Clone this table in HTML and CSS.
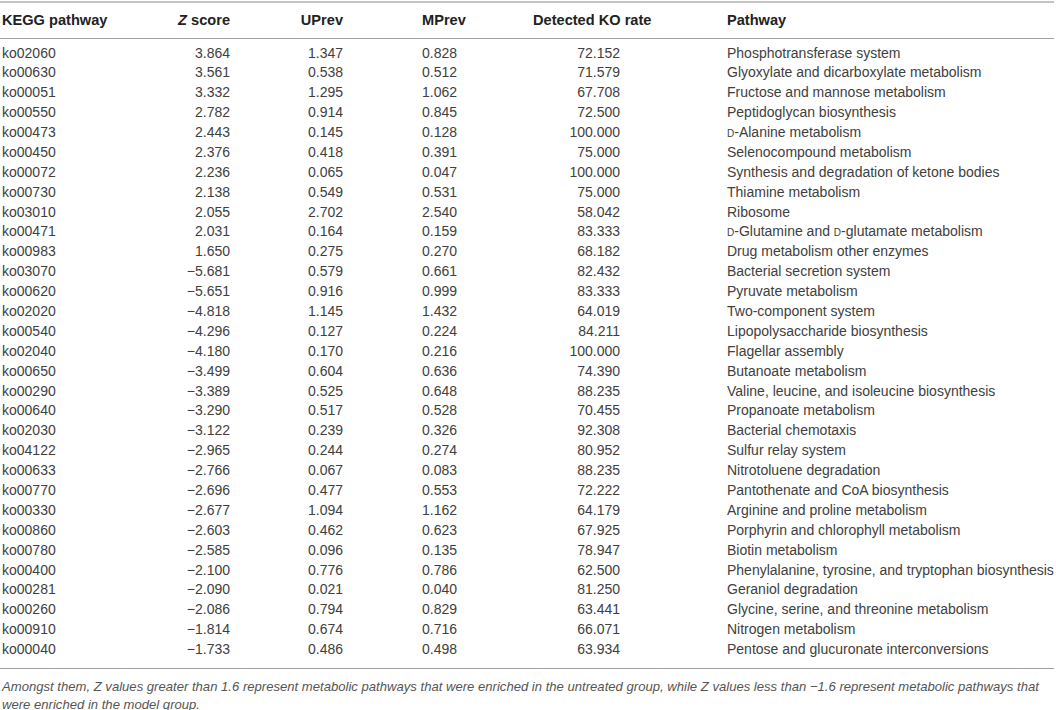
FILE: index.html
```html
<!DOCTYPE html>
<html lang="en">
<head>
  <meta charset="UTF-8">
  <title>KEGG pathway Z scores</title>
  <link rel="stylesheet" href="styles.css">
</head>
<body>
  <table class="kegg">
    <colgroup>
      <col class="c-id">
      <col class="c-z">
      <col class="c-u">
      <col class="c-m">
      <col class="c-ko">
      <col class="c-path">
    </colgroup>
    <thead>
      <tr>
        <th class="id">KEGG pathway</th>
        <th class="z"><i>Z</i> score</th>
        <th class="u">UPrev</th>
        <th class="m">MPrev</th>
        <th class="ko-h">Detected KO rate</th>
        <th class="path">Pathway</th>
      </tr>
    </thead>
    <tbody>
      <tr class="first"><td class="id">ko02060</td><td class="z">3.864</td><td class="u">1.347</td><td class="m">0.828</td><td class="ko">72.152</td><td class="path">Phosphotransferase system</td></tr>
      <tr><td class="id">ko00630</td><td class="z">3.561</td><td class="u">0.538</td><td class="m">0.512</td><td class="ko">71.579</td><td class="path">Glyoxylate and dicarboxylate metabolism</td></tr>
      <tr><td class="id">ko00051</td><td class="z">3.332</td><td class="u">1.295</td><td class="m">1.062</td><td class="ko">67.708</td><td class="path">Fructose and mannose metabolism</td></tr>
      <tr><td class="id">ko00550</td><td class="z">2.782</td><td class="u">0.914</td><td class="m">0.845</td><td class="ko">72.500</td><td class="path">Peptidoglycan biosynthesis</td></tr>
      <tr><td class="id">ko00473</td><td class="z">2.443</td><td class="u">0.145</td><td class="m">0.128</td><td class="ko">100.000</td><td class="path"><span class="sc">d</span>-Alanine metabolism</td></tr>
      <tr><td class="id">ko00450</td><td class="z">2.376</td><td class="u">0.418</td><td class="m">0.391</td><td class="ko">75.000</td><td class="path">Selenocompound metabolism</td></tr>
      <tr><td class="id">ko00072</td><td class="z">2.236</td><td class="u">0.065</td><td class="m">0.047</td><td class="ko">100.000</td><td class="path">Synthesis and degradation of ketone bodies</td></tr>
      <tr><td class="id">ko00730</td><td class="z">2.138</td><td class="u">0.549</td><td class="m">0.531</td><td class="ko">75.000</td><td class="path">Thiamine metabolism</td></tr>
      <tr><td class="id">ko03010</td><td class="z">2.055</td><td class="u">2.702</td><td class="m">2.540</td><td class="ko">58.042</td><td class="path">Ribosome</td></tr>
      <tr><td class="id">ko00471</td><td class="z">2.031</td><td class="u">0.164</td><td class="m">0.159</td><td class="ko">83.333</td><td class="path"><span class="sc">d</span>-Glutamine and <span class="sc">d</span>-glutamate metabolism</td></tr>
      <tr><td class="id">ko00983</td><td class="z">1.650</td><td class="u">0.275</td><td class="m">0.270</td><td class="ko">68.182</td><td class="path">Drug metabolism other enzymes</td></tr>
      <tr><td class="id">ko03070</td><td class="z">&minus;5.681</td><td class="u">0.579</td><td class="m">0.661</td><td class="ko">82.432</td><td class="path">Bacterial secretion system</td></tr>
      <tr><td class="id">ko00620</td><td class="z">&minus;5.651</td><td class="u">0.916</td><td class="m">0.999</td><td class="ko">83.333</td><td class="path">Pyruvate metabolism</td></tr>
      <tr><td class="id">ko02020</td><td class="z">&minus;4.818</td><td class="u">1.145</td><td class="m">1.432</td><td class="ko">64.019</td><td class="path">Two-component system</td></tr>
      <tr><td class="id">ko00540</td><td class="z">&minus;4.296</td><td class="u">0.127</td><td class="m">0.224</td><td class="ko">84.211</td><td class="path">Lipopolysaccharide biosynthesis</td></tr>
      <tr><td class="id">ko02040</td><td class="z">&minus;4.180</td><td class="u">0.170</td><td class="m">0.216</td><td class="ko">100.000</td><td class="path">Flagellar assembly</td></tr>
      <tr><td class="id">ko00650</td><td class="z">&minus;3.499</td><td class="u">0.604</td><td class="m">0.636</td><td class="ko">74.390</td><td class="path">Butanoate metabolism</td></tr>
      <tr><td class="id">ko00290</td><td class="z">&minus;3.389</td><td class="u">0.525</td><td class="m">0.648</td><td class="ko">88.235</td><td class="path">Valine, leucine, and isoleucine biosynthesis</td></tr>
      <tr><td class="id">ko00640</td><td class="z">&minus;3.290</td><td class="u">0.517</td><td class="m">0.528</td><td class="ko">70.455</td><td class="path">Propanoate metabolism</td></tr>
      <tr><td class="id">ko02030</td><td class="z">&minus;3.122</td><td class="u">0.239</td><td class="m">0.326</td><td class="ko">92.308</td><td class="path">Bacterial chemotaxis</td></tr>
      <tr><td class="id">ko04122</td><td class="z">&minus;2.965</td><td class="u">0.244</td><td class="m">0.274</td><td class="ko">80.952</td><td class="path">Sulfur relay system</td></tr>
      <tr><td class="id">ko00633</td><td class="z">&minus;2.766</td><td class="u">0.067</td><td class="m">0.083</td><td class="ko">88.235</td><td class="path">Nitrotoluene degradation</td></tr>
      <tr><td class="id">ko00770</td><td class="z">&minus;2.696</td><td class="u">0.477</td><td class="m">0.553</td><td class="ko">72.222</td><td class="path">Pantothenate and CoA biosynthesis</td></tr>
      <tr><td class="id">ko00330</td><td class="z">&minus;2.677</td><td class="u">1.094</td><td class="m">1.162</td><td class="ko">64.179</td><td class="path">Arginine and proline metabolism</td></tr>
      <tr><td class="id">ko00860</td><td class="z">&minus;2.603</td><td class="u">0.462</td><td class="m">0.623</td><td class="ko">67.925</td><td class="path">Porphyrin and chlorophyll metabolism</td></tr>
      <tr><td class="id">ko00780</td><td class="z">&minus;2.585</td><td class="u">0.096</td><td class="m">0.135</td><td class="ko">78.947</td><td class="path">Biotin metabolism</td></tr>
      <tr><td class="id">ko00400</td><td class="z">&minus;2.100</td><td class="u">0.776</td><td class="m">0.786</td><td class="ko">62.500</td><td class="path">Phenylalanine, tyrosine, and tryptophan biosynthesis</td></tr>
      <tr><td class="id">ko00281</td><td class="z">&minus;2.090</td><td class="u">0.021</td><td class="m">0.040</td><td class="ko">81.250</td><td class="path">Geraniol degradation</td></tr>
      <tr><td class="id">ko00260</td><td class="z">&minus;2.086</td><td class="u">0.794</td><td class="m">0.829</td><td class="ko">63.441</td><td class="path">Glycine, serine, and threonine metabolism</td></tr>
      <tr><td class="id">ko00910</td><td class="z">&minus;1.814</td><td class="u">0.674</td><td class="m">0.716</td><td class="ko">66.071</td><td class="path">Nitrogen metabolism</td></tr>
      <tr class="last"><td class="id">ko00040</td><td class="z">&minus;1.733</td><td class="u">0.486</td><td class="m">0.498</td><td class="ko">63.934</td><td class="path">Pentose and glucuronate interconversions</td></tr>
    </tbody>
  </table>
  <p class="note">Amongst them, <i>Z</i> values greater than 1.6 represent metabolic pathways that were enriched in the untreated group, while <i>Z</i> values less than &minus;1.6 represent metabolic pathways that were enriched in the model group.</p>
</body>
</html>
```

FILE: styles.css
```css
* { margin: 0; padding: 0; box-sizing: border-box; }
body { font-family: "Liberation Sans", Arial, sans-serif; background: #fff; color: #404040; padding-top: 1px; }

.kegg { width: 1054px; border-collapse: collapse; table-layout: fixed; border-top: 2px solid #c4c4c4; font-size: 14px; }
.c-id { width: 150px; }
.c-z { width: 82px; }
.c-u { width: 113px; }
.c-m { width: 185px; }
.c-ko { width: 197px; }
.c-path { width: 327px; }

.kegg th { font-size: 14.6px; font-weight: bold; color: #222; height: 36px; text-align: left; border-bottom: 1px solid #a0a0a0; vertical-align: middle; }
.kegg td { height: 19.9px; line-height: 15px; white-space: nowrap; vertical-align: middle; }

.id { padding-left: 2px; }
.kegg .z, .kegg .u { text-align: right; padding-right: 2px; }
.m { padding-left: 77px; }
.ko-h { padding-left: 3px; }
.kegg .ko { text-align: right; padding-right: 107px; }

.kegg tr.first td { padding-top: 5px; height: 24.9px; }
.kegg tr.last td { padding-bottom: 9px; height: 28.9px; border-bottom: 1px solid #a0a0a0; }

.sc { font-variant: small-caps; }

.note { font-size: 13.1px; font-style: italic; line-height: 18px; color: #555; padding: 9px 2px 0; }
```
